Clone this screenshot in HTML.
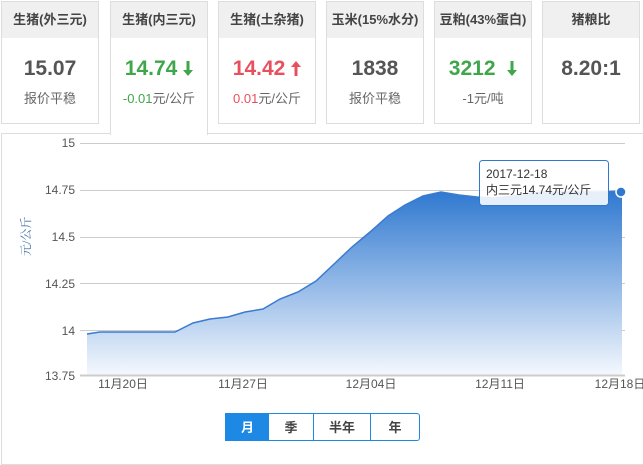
<!DOCTYPE html>
<html><head><meta charset="utf-8"><style>
body{margin:0;width:643px;height:451px;background:#fff;font-family:"Liberation Sans","Noto Sans CJK SC",sans-serif;position:relative;overflow:hidden}
.card{position:absolute;top:1px;width:98px;height:123px;border:1px solid #ddd;background:#fff;text-align:center;box-sizing:border-box}
.card .h{height:36px;background:#f0f0f0;line-height:36px;font-size:13px;color:#444;font-weight:bold}
.card .v{margin-top:18px;font-size:21px;font-weight:bold;color:#555;height:26px;line-height:26px}
.card .s{margin-top:6px;font-size:13px;color:#666}
.g{color:#3fa64a!important}.r{color:#e9505f!important}
.panel{position:absolute;left:1px;top:133px;width:650px;height:330px;border:1px solid #ddd}
.btn{position:absolute;top:413px;height:28px;line-height:28px;text-align:center;font-size:13px;font-weight:bold;color:#444;border:1px solid #1e88e5;box-sizing:border-box;background:#fff}
.ar{display:inline-block;vertical-align:-1px}
</style></head><body>
<div class="panel"></div>
<div class="card" style="left:1px"><div class="h">生猪(外三元)</div><div class="v">15.07</div><div class="s">报价平稳</div></div>
<div class="card" style="left:110px;height:134px;border-bottom:none;z-index:2"><div class="h">生猪(内三元)</div><div class="v g">14.74 <svg class="ar" width="10" height="15" viewBox="0 0 10 15"><path d="M3.5,0H6.5V9H10L5,15L0,9H3.5Z" fill="#3fa64a"/></svg></div><div class="s"><span class="g">-0.01</span>元/公斤</div></div>
<div class="card" style="left:218px"><div class="h">生猪(土杂猪)</div><div class="v r">14.42 <svg class="ar" width="10" height="15" viewBox="0 0 10 15"><path d="M3.5,15H6.5V6H10L5,0L0,6H3.5Z" fill="#e9505f"/></svg></div><div class="s"><span class="r">0.01</span>元/公斤</div></div>
<div class="card" style="left:326px"><div class="h">玉米(15%水分)</div><div class="v">1838</div><div class="s">报价平稳</div></div>
<div class="card" style="left:434px"><div class="h">豆粕(43%蛋白)</div><div class="v g">3212 &nbsp;<svg class="ar" width="10" height="15" viewBox="0 0 10 15"><path d="M3.5,0H6.5V9H10L5,15L0,9H3.5Z" fill="#3fa64a"/></svg></div><div class="s">-1元/吨</div></div>
<div class="card" style="left:542px"><div class="h">猪粮比</div><div class="v">8.20:1</div></div>
<svg style="position:absolute;left:0;top:0" width="643" height="451">
<defs><linearGradient id="gr" x1="0" y1="0" x2="0" y2="1"><stop offset="0" stop-color="#2f78d0"/><stop offset="1" stop-color="#f4f8fd"/></linearGradient></defs>
<g stroke="#ccc" stroke-width="1">
<line x1="80" x2="625" y1="143.5" y2="143.5"/><line x1="80" x2="625" y1="190.5" y2="190.5"/><line x1="80" x2="625" y1="237.5" y2="237.5"/><line x1="80" x2="625" y1="283.5" y2="283.5"/><line x1="80" x2="625" y1="330.5" y2="330.5"/></g>
<path d="M87,334 L100,332 L175,332 L193,323 L210,319 L228,317 L245,312 L263,309 L280,299 L298,292 L316,281 L333,265 L352,247 L370,232 L388,216 L405,205 L423,196 L441,192 L459,195 L477,197 L495,198 L513,196 L530,193 L548,192 L566,192 L585,192 L603,192 L622,191 L622,375 L87,375Z" fill="url(#gr)"/>
<path d="M87,334 L100,332 L175,332 L193,323 L210,319 L228,317 L245,312 L263,309 L280,299 L298,292 L316,281 L333,265 L352,247 L370,232 L388,216 L405,205 L423,196 L441,192 L459,195 L477,197 L495,198 L513,196 L530,193 L548,192 L566,192 L585,192 L603,192 L622,191" fill="none" stroke="#3a7bd0" stroke-width="1.5"/>
<line x1="80" x2="625" y1="375.5" y2="375.5" stroke="#ccc" stroke-width="2"/>
<circle cx="621" cy="192" r="5" fill="#2f78d0" stroke="#fff" stroke-width="1.5"/>
<g font-size="12" fill="#555" text-anchor="end">
<text x="75" y="147">15</text><text x="75" y="194">14.75</text><text x="75" y="241">14.5</text><text x="75" y="288">14.25</text><text x="75" y="335">14</text><text x="75" y="380">13.75</text></g>
<g font-size="12" fill="#555" text-anchor="middle">
<text x="123" y="388">11月20日</text><text x="243" y="388">11月27日</text><text x="371" y="388">12月04日</text><text x="500" y="388">12月11日</text><text x="620" y="388">12月18日</text></g>
<text transform="translate(30,256) rotate(-90)" font-size="12" fill="#4572a7" font-family="Liberation Serif,Noto Serif CJK SC,serif">元/公斤</text>
<rect x="479.5" y="160.5" width="129" height="45" rx="3" fill="#fff" fill-opacity="0.88" stroke="#2f78d0"/>
<text x="486" y="178" font-size="12" fill="#333">2017-12-18</text>
<text x="486" y="194" font-size="12" fill="#333">内三元14.74元/公斤</text>
</svg>
<div class="btn" style="left:225px;width:45px;background:#1e88e5;color:#fff">月</div>
<div class="btn" style="left:269px;width:45px;border-left:none">季</div>
<div class="btn" style="left:313px;width:58px">半年</div>
<div class="btn" style="left:370px;width:50px;border-radius:0 3px 3px 0">年</div>
</body></html>
